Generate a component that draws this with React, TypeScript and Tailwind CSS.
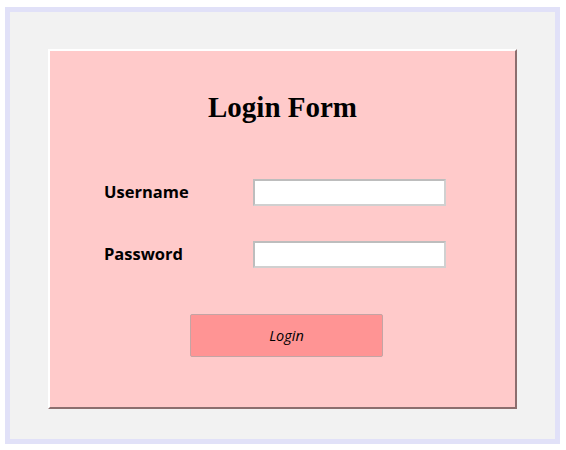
export default function App() {
  return (
    <div className="w-[566px] h-[450px] bg-white pt-[7px] pl-[5px]">
      <div className="w-[555px] h-[437px] border-[5px] border-[#e1e1f8] bg-[#f2f2f2] pt-[37px] pl-[38px]">
        <div className="w-[469px] h-[360px] bg-[#ffcaca] border-2 border-t-white border-l-white border-r-[#8c6e6e] border-b-[#8c6e6e] flex flex-col items-center">
          <h1 className="mt-[40px] text-[29px] leading-[32px] font-bold text-black [font-family:'Liberation_Serif',serif]">
            Login Form
          </h1>
          <div className="mt-[56px] w-full pl-[54px] flex flex-col gap-[35px] [font-family:'Open_Sans',sans-serif]">
            <div className="flex items-center">
              <label className="w-[149px] text-[16.5px] font-bold text-black">Username</label>
              <input className="w-[193px] h-[27px] bg-white border-2 border-t-[#bdbdbd] border-l-[#bdbdbd] border-r-[#d0d0d0] border-b-[#d0d0d0] outline-none" />
            </div>
            <div className="flex items-center">
              <label className="w-[149px] text-[16.5px] font-bold text-black">Password</label>
              <input type="password" className="w-[193px] h-[27px] bg-white border-2 border-t-[#bdbdbd] border-l-[#bdbdbd] border-r-[#d0d0d0] border-b-[#d0d0d0] outline-none" />
            </div>
          </div>
          <button className="mt-[46px] ml-[8px] w-[193px] h-[43px] bg-[#ff9494] border border-[#c4a4a4] rounded-[2px] text-[14.5px] italic text-black [font-family:'Open_Sans',sans-serif]">
            Login
          </button>
        </div>
      </div>
    </div>
  );
}
